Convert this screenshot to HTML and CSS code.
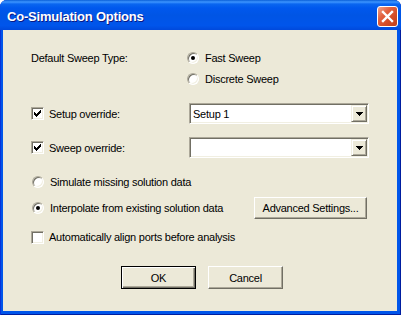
FILE: index.html
```html
<!DOCTYPE html>
<html lang="en">

<head>
  <meta charset="UTF-8">
  <meta name="viewport" content="width=device-width, initial-scale=1.0">
  <title>Co-Simulation Options</title>
  <link rel="stylesheet" href="styles.css">
</head>

<body>
  <div class="window">
    <div class="titlebar">
      <span class="title">Co-Simulation Options</span>
      <div class="close-btn">
        <svg width="13" height="13" viewBox="0 0 13 13">
          <path d="M2 2 L11 11 M11 2 L2 11" stroke="#fff" stroke-width="2.4" stroke-linecap="square" fill="none" />
        </svg>
      </div>
    </div>

    <div class="client">
      <div class="row row-sweep">
        <span class="label-col">Default Sweep Type:</span>
        <label class="opt"><span class="radio checked"></span>Fast Sweep</label>
      </div>
      <div class="row row-discrete">
        <label class="opt"><span class="radio"></span>Discrete Sweep</label>
      </div>

      <div class="row row-setup">
        <label class="opt check-col"><span class="checkbox checked">
            <svg width="9" height="9" viewBox="0 0 9 9" shape-rendering="crispEdges">
              <path d="M7 1h1v1h-1z M6 2h2v1h-2z M1 3h1v1h-1z M5 3h3v1h-3z M1 4h2v1h-2z M4 4h3v1h-3z M1 5h5v1h-5z M2 6h3v1h-3z M3 7h1v1h-1z" fill="#000" />
            </svg></span>Setup override:</label>
        <div class="combo">
          <span class="combo-text">Setup 1</span>
          <span class="combo-btn">
            <svg width="7" height="4" viewBox="0 0 7 4" shape-rendering="crispEdges">
              <path d="M0 0h7v1h-1v1h-1v1h-1v1h-1v-1h-1v-1h-1v-1h-1z" fill="#000" />
            </svg>
          </span>
        </div>
      </div>

      <div class="row row-sweepov">
        <label class="opt check-col"><span class="checkbox checked">
            <svg width="9" height="9" viewBox="0 0 9 9" shape-rendering="crispEdges">
              <path d="M7 1h1v1h-1z M6 2h2v1h-2z M1 3h1v1h-1z M5 3h3v1h-3z M1 4h2v1h-2z M4 4h3v1h-3z M1 5h5v1h-5z M2 6h3v1h-3z M3 7h1v1h-1z" fill="#000" />
            </svg></span>Sweep override:</label>
        <div class="combo">
          <span class="combo-text"></span>
          <span class="combo-btn">
            <svg width="7" height="4" viewBox="0 0 7 4" shape-rendering="crispEdges">
              <path d="M0 0h7v1h-1v1h-1v1h-1v1h-1v-1h-1v-1h-1v-1h-1z" fill="#000" />
            </svg>
          </span>
        </div>
      </div>

      <div class="row row-simulate">
        <label class="opt"><span class="radio"></span>Simulate missing solution data</label>
      </div>
      <div class="row row-interp">
        <label class="opt interp-col"><span class="radio checked"></span>Interpolate from existing solution data</label>
        <div class="btn btn-adv">Advanced Settings...</div>
      </div>

      <div class="row row-align">
        <label class="opt"><span class="checkbox"></span>Automatically align ports before analysis</label>
      </div>

      <div class="row row-buttons">
        <div class="btn btn-default">OK</div>
        <div class="btn">Cancel</div>
      </div>
    </div>
  </div>
</body>

</html>
```

FILE: styles.css
```css
body {
  margin: 0;
  background: #fff;
  font-family: "Liberation Sans", Arial, sans-serif;
  font-size: 11px;
  letter-spacing: -0.25px;
  color: #000;
}

.window {
  width: 401px;
  height: 315px;
  display: flex;
  flex-direction: column;
  background: #0055ea;
  border-radius: 7px 7px 0 0;
  box-shadow: inset 1px 0 #0831d9, inset -1px 0 #001ea0, inset 0 -1px #001ea0;
}

.titlebar {
  height: 30px;
  display: flex;
  align-items: center;
  justify-content: space-between;
  padding: 0 3px 0 7px;
  border-radius: 7px 7px 0 0;
  background: linear-gradient(to bottom, #0a5fd8 0, #3d95ff 2px, #0a66f0 4px, #0058ee 8px, #0055e5 50%, #0055eb 85%, #0049dc 100%);
}

.title {
  color: #fff;
  font-weight: bold;
  font-size: 13px;
  letter-spacing: -0.2px;
  text-shadow: 1px 1px #0a1883;
  margin-top: 2px;
}

.close-btn {
  width: 19px;
  height: 19px;
  margin-top: 2px;
  border: 1px solid #fff;
  border-radius: 3px;
  background: linear-gradient(135deg, #f0a48c 0, #e2613f 35%, #d24a24 70%, #c0401c 100%);
  display: flex;
  align-items: center;
  justify-content: center;
}

.client {
  flex: 1;
  margin: 0 4px 4px 3px;
  background: #ece9d8;
  padding: 18px 0 0 28px;
}

.row {
  display: flex;
  align-items: center;
}

.opt {
  display: flex;
  align-items: center;
  white-space: nowrap;
}

.label-col {
  width: 155px;
}

.check-col {
  width: 158px;
}

.interp-col {
  width: 223px;
}

.row-sweep {
  height: 20px;
}

.row-discrete {
  height: 20px;
  margin-top: 1px;
  padding-left: 155px;
}

.row-setup {
  height: 21px;
  margin-top: 14px;
}

.row-sweepov {
  height: 21px;
  margin-top: 13px;
}

.row-simulate {
  height: 20px;
  margin-top: 14px;
}

.row-interp {
  height: 22px;
  margin-top: 5px;
}

.row-align {
  height: 20px;
  margin-top: 8px;
}

.row-buttons {
  margin-top: 19px;
  padding-left: 90px;
  gap: 12px;
}

.radio {
  width: 12px;
  height: 12px;
  box-sizing: border-box;
  border-radius: 50%;
  border: 1px solid;
  border-color: #aca899 #fff #fff #aca899;
  box-shadow: inset 1px 1px #716f64, inset -1px -1px #f1efe2;
  background: #fff;
  margin: 0 6px 0 1px;
  display: flex;
  align-items: center;
  justify-content: center;
}

.radio.checked::after {
  content: "";
  width: 4px;
  height: 4px;
  border-radius: 50%;
  background: #000;
}

.checkbox {
  width: 13px;
  height: 13px;
  box-sizing: border-box;
  border: 1px solid;
  border-color: #aca899 #fff #fff #aca899;
  box-shadow: inset 1px 1px #716f64, inset -1px -1px #f1efe2;
  background: #fff;
  margin-right: 5px;
  padding: 1px;
  display: flex;
}

.combo {
  width: 180px;
  height: 21px;
  box-sizing: border-box;
  border: 1px solid;
  border-color: #aca899 #fff #fff #aca899;
  box-shadow: inset 1px 1px #716f64, inset -1px -1px #f1efe2;
  background: #fff;
  padding: 1px 1px 1px 3px;
  display: flex;
  align-items: center;
}

.combo-text {
  flex: 1;
}

.combo-btn {
  width: 16px;
  height: 17px;
  box-sizing: border-box;
  background: #ece9d8;
  border: 1px solid;
  border-color: #f1efe2 #716f64 #716f64 #f1efe2;
  box-shadow: inset 1px 1px #fff, inset -1px -1px #aca899;
  display: flex;
  align-items: center;
  justify-content: center;
}

.btn {
  width: 75px;
  height: 23px;
  box-sizing: border-box;
  background: #ece9d8;
  border: 1px solid;
  border-color: #fff #716f64 #716f64 #fff;
  box-shadow: inset -1px -1px #aca899;
  display: flex;
  align-items: center;
  justify-content: center;
}

.btn-default {
  border-color: #000;
  box-shadow: inset 1px 1px #fff, inset -1px -1px #716f64, inset -2px -2px #aca899;
}

.btn-adv {
  width: 113px;
  height: 22px;
}
```
